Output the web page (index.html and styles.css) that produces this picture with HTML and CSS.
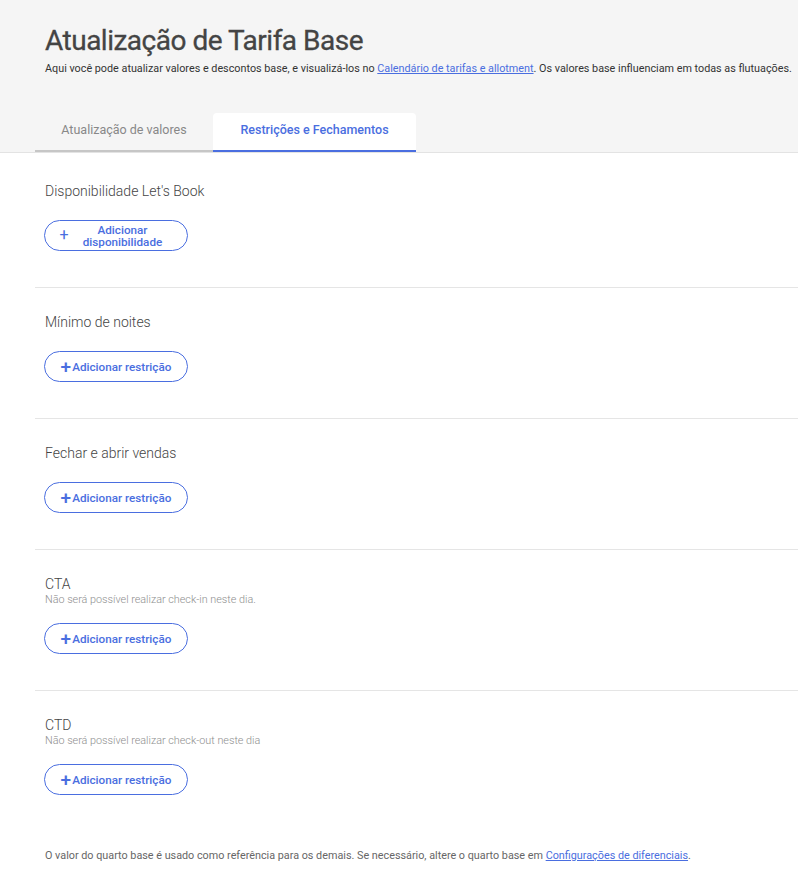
FILE: index.html
```html
<!DOCTYPE html>
<html lang="pt-BR">
<head>
    <meta charset="UTF-8">
    <meta name="viewport" content="width=device-width, initial-scale=1.0">
    <title>Atualização de Tarifa Base</title>
    <link rel="stylesheet" href="styles.css">
</head>
<body>
    <div class="page-header">
        <div class="intro">
            <h1>Atualização de Tarifa Base</h1>
            <p>Aqui você pode atualizar valores e descontos base, e visualizá-los no <a href="#">Calendário de tarifas e allotment</a>. Os valores base influenciam em todas as flutuações.</p>
        </div>
        <div class="tabs">
            <div class="tab">Atualização de valores</div>
            <div class="tab active">Restrições e Fechamentos</div>
        </div>
    </div>

    <div class="content">
        <div class="section first">
            <div class="section-head">
                <h2>Disponibilidade Let's Book</h2>
            </div>
            <button class="add-btn wide">
                <span class="plus thin">+</span>
                <span class="label">Adicionar<br>disponibilidade</span>
            </button>
        </div>

        <div class="section">
            <div class="section-head">
                <h2>Mínimo de noites</h2>
            </div>
            <button class="add-btn"><span class="plus">+</span>Adicionar restrição</button>
        </div>

        <div class="section">
            <div class="section-head">
                <h2>Fechar e abrir vendas</h2>
            </div>
            <button class="add-btn"><span class="plus">+</span>Adicionar restrição</button>
        </div>

        <div class="section">
            <div class="section-head">
                <h2>CTA</h2>
                <p>Não será possível realizar check-in neste dia.</p>
            </div>
            <button class="add-btn"><span class="plus">+</span>Adicionar restrição</button>
        </div>

        <div class="section last">
            <div class="section-head">
                <h2>CTD</h2>
                <p>Não será possível realizar check-out neste dia</p>
            </div>
            <button class="add-btn"><span class="plus">+</span>Adicionar restrição</button>
        </div>

        <p class="footnote">O valor do quarto base é usado como referência para os demais. Se necessário, altere o quarto base em <a href="#">Configurações de diferenciais</a>.</p>
    </div>
</body>
</html>
```

FILE: styles.css
```css
body {
    margin: 0;
    font-family: Roboto, "Liberation Sans", sans-serif;
    background: #fff;
    color: #444;
}
a {
    color: #4a6ee0;
}
.page-header {
    background: #f5f5f5;
    padding: 24px 0 0 35px;
    border-bottom: 1px solid #e3e3e3;
}
.intro {
    padding-left: 10px;
    margin-bottom: 37px;
}
.intro h1 {
    margin: 0;
    font-size: 28px;
    font-weight: 400;
    letter-spacing: -0.5px;
    color: #444;
    line-height: 34px;
    -webkit-text-stroke: 0.3px #444;
}
.intro p {
    margin: 4px 0 0;
    font-size: 10.8px;
    color: #333;
    line-height: 14px;
    white-space: nowrap;
}
.tabs {
    display: flex;
    align-items: flex-end;
}
.tab {
    height: 37px;
    line-height: 33px;
    font-size: 12.5px;
    text-align: center;
    color: #888;
    border-bottom: 2px solid #c6c6c6;
}
.tab:first-child {
    width: 178px;
}
.tab.active {
    width: 203px;
    background: #fff;
    color: #4a6ee0;
    font-weight: 500;
    border-bottom-color: #4a6ee0;
    border-radius: 4px 4px 0 0;
}
.content {
    padding-left: 35px;
}
.section {
    padding: 24px 0 36px 10px;
    border-bottom: 1px solid #e5e5e5;
}
.section.first {
    padding-top: 28px;
}
.section.last {
    border-bottom: none;
}
.section-head {
    margin-bottom: 19px;
}
.section-head h2 {
    margin: 0;
    font-size: 14px;
    font-weight: 300;
    color: #444;
    line-height: 20px;
}
.section-head p {
    margin: -1px 0 -2px;
    font-size: 10.8px;
    font-weight: 300;
    color: #8e8e8e;
    line-height: 13px;
}
.add-btn {
    display: flex;
    align-items: center;
    justify-content: center;
    width: 144px;
    height: 31px;
    margin-left: -1px;
    padding: 0;
    background: #fff;
    border: 1px solid #4a6ee0;
    border-radius: 16px;
    color: #4a6ee0;
    font-family: Roboto, "Liberation Sans", sans-serif;
    font-size: 11.7px;
    font-weight: 500;
    cursor: pointer;
}
.plus {
    font-size: 19px;
    font-weight: 500;
    line-height: 1;
    margin-right: 1px;
    margin-top: -1px;
}
.add-btn.wide {
    justify-content: flex-start;
    padding-left: 9px;
}
.plus.thin {
    font-size: 16px;
    font-weight: 400;
    margin-right: 0;
    width: 20px;
}
.add-btn .label {
    flex: 1;
    line-height: 12px;
    padding-right: 16px;
}
.footnote {
    margin: 18px 0 0 10px;
    font-size: 10.8px;
    color: #666;
}
```
